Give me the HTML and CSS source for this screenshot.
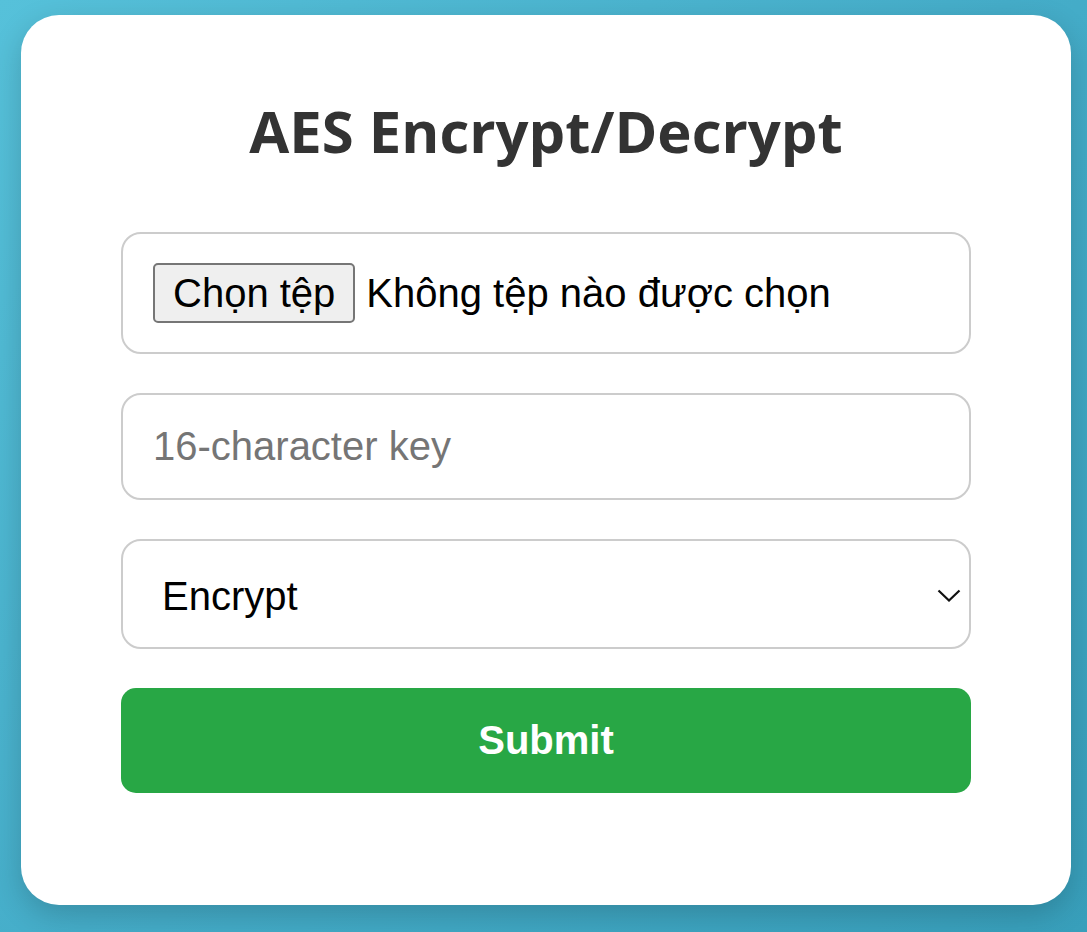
FILE: index.html
```html
<!DOCTYPE html>
<html lang="vi">
<head>
<meta charset="utf-8">
<title>AES Encrypt/Decrypt</title>
<link rel="stylesheet" href="styles.css">
</head>
<body>
<main class="card">
  <h1 class="title">AES Encrypt/Decrypt</h1>
  <form class="form">
    <div class="field file-field">
      <span class="file-btn">Chọn tệp</span>
      <span class="file-name">Không tệp nào được chọn</span>
    </div>
    <input class="field text-field" type="text" placeholder="16-character key">
    <div class="field select-field">
      <span class="select-value">Encrypt</span>
      <svg class="chevron" width="24" height="13" viewBox="0 0 24 13"><path d="M1.5 1.5 L12 11.5 L22.5 1.5" fill="none" stroke="#111" stroke-width="2.2"/></svg>
    </div>
    <button class="submit" type="button">Submit</button>
  </form>
</main>
</body>
</html>
```
FILE: styles.css
```css
html, body {
  margin: 0;
  height: 100%;
}
body {
  background: linear-gradient(135deg, #56c1da 0%, #45adc9 50%, #389fbb 100%);
  padding: 15px 0 0 21px;
  box-sizing: border-box;
  font-family: "Liberation Sans", Arial, sans-serif;
}
.card {
  width: 1050px;
  box-sizing: border-box;
  background: #fff;
  border-radius: 38px;
  padding: 76px 100px 112px;
  box-shadow: 0 10px 30px rgba(0, 0, 0, 0.18);
}
.title {
  margin: 0 0 61px;
  text-align: center;
  font-family: "Open Sans", "Noto Sans", sans-serif;
  font-weight: 700;
  font-size: 58px;
  line-height: 80px;
  color: #333;
}
.form {
  display: flex;
  flex-direction: column;
  gap: 39px;
}
.field {
  box-sizing: border-box;
  width: 100%;
  border: 2px solid #ccc;
  border-radius: 20px;
  background: #fff;
  font-family: "Liberation Sans", Arial, sans-serif;
  font-size: 40px;
  line-height: 46px;
  color: #000;
}
.file-field {
  height: 122px;
  display: flex;
  align-items: center;
  padding: 0 30px;
}
.file-btn {
  box-sizing: border-box;
  height: 60px;
  padding: 5px 18px;
  border: 2px solid #767676;
  border-radius: 5px;
  background: #efefef;
  margin-right: 11px;
}
.text-field {
  display: block;
  height: 107px;
  padding: 28px 30px 29px;
  outline: none;
}
.text-field::placeholder {
  color: #757575;
}
.select-field {
  height: 110px;
  display: flex;
  align-items: center;
  justify-content: space-between;
  padding: 0 8px 0 39px;
}
.select-value {
  padding-top: 4px;
}
.chevron {
  display: block;
  margin-top: 2px;
}
.submit {
  height: 105px;
  border: 0;
  border-radius: 15px;
  background: #28a745;
  color: #fff;
  font-family: "Liberation Sans", Arial, sans-serif;
  font-weight: 700;
  font-size: 40px;
  cursor: pointer;
}
```
